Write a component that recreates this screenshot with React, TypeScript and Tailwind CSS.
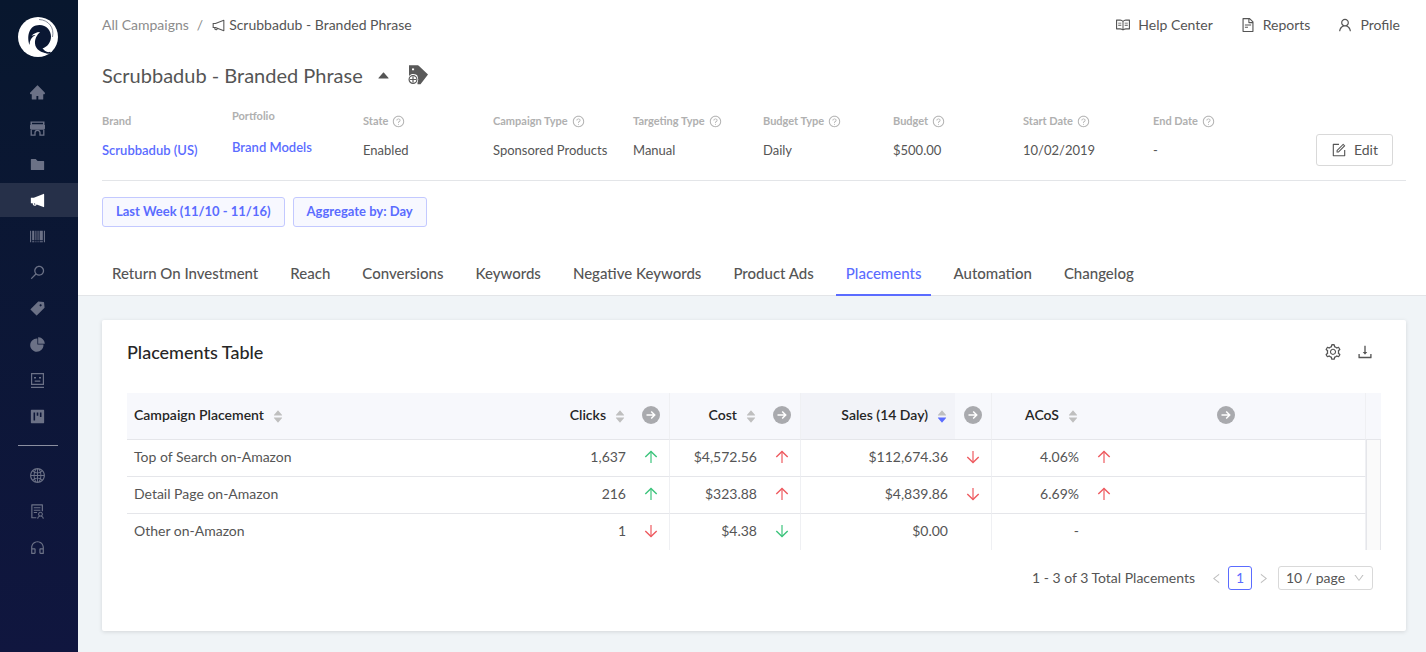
import React from 'react';
import {
  AiFillCaretDown,
  AiFillCaretUp,
  AiFillFolder,
  AiFillHome,
  AiFillNotification,
  AiFillPieChart,
  AiFillProject,
  AiFillTag,
  AiOutlineBarcode,
  AiOutlineCustomerService,
  AiOutlineDown,
  AiOutlineDownload,
  AiOutlineFileText,
  AiOutlineForm,
  AiOutlineGlobal,
  AiOutlineLeft,
  AiOutlineNotification,
  AiOutlineQuestionCircle,
  AiOutlineRead,
  AiOutlineRight,
  AiOutlineSearch,
  AiOutlineSetting,
  AiOutlineSolution,
  AiOutlineUser,
} from 'react-icons/ai';

type IconType = React.ComponentType<{ className?: string }>;
type Trend = 'up-good' | 'up-bad' | 'down-good' | 'down-bad' | null;

const Logo = () => (
  <svg viewBox="0 0 40 40" className="h-10 w-10">
    <circle cx="20" cy="20" r="20" fill="#fff" />
    <path
      d="M11.500 28C8.500 19 11 8 21.500 8C28.500 8 33 13.500 33 19.500C33 25.500 29 30 24.500 31.500C26 34 28.500 35.500 32 36C24 36.500 17.500 33 17 26.500C16.700 21.500 19 18 22 15C18.500 15.200 15.500 16.500 13.500 19C15 18.300 16 18 17.500 18C13.500 20 11.500 23.500 11.500 28Z"
      fill="#0a1733"
    />
    <path d="M21 2.500C31 3 36.500 11 34.500 20" fill="none" stroke="#0a1733" strokeWidth="0.5" />
    <path d="M24 32C26.500 35.500 29.500 36.500 32.500 35.500" fill="none" stroke="#0a1733" strokeWidth="1.5" />
  </svg>
);

const StoreIcon: IconType = ({ className }) => (
  <svg viewBox="-0.5 -0.5 17 17" className={className} fill="currentColor">
    <path fillRule="evenodd" d="M1 1h14v4H1zM2.500 2.200v1.600h11V2.200z" />
    <path d="M.5 4.500h15v3.800l-1.500 1H2l-1.500-1z" />
    <path d="M1.700 9v5.700h3.800v-2.400a2.500 2.500 0 0 1 5 0v2.400h3.800V9" fill="none" stroke="currentColor" strokeWidth="1.300" />
  </svg>
);

const RobotIcon: IconType = ({ className }) => (
  <svg viewBox="-0.5 -0.5 17 17" className={className} fill="currentColor">
    <path fillRule="evenodd" d="M1.500 0.500h13v12h-13zM2.700 1.700v9.600h10.600V1.700z" />
    <path d="M4.500 4.500h2V6h-2zM9.500 4.500h2V6h-2zM5.200 8h5.600v1.300H5.200zM1.500 14.300h13v1.200h-13z" />
  </svg>
);

const MirroredSearch: IconType = ({ className }) => <AiOutlineSearch className={`${className} -scale-x-100`} />;

const TagAddIcon = () => (
  <svg viewBox="0 0 20 20" className="h-5 w-5">
    <path fillRule="evenodd" d="M1 .5h9.500L20 9.500l-7.500 9.700H9.500V9H1zM4 3.200v2.300h2.300V3.200z" fill="#595959" />
    <circle cx="5" cy="14.500" r="5.200" fill="#fff" />
    <path d="M1 .5h9v10.500C8 8.500 3 8 1 11z M4 3.200v2.300h2.300V3.200z" fillRule="evenodd" fill="#595959" />
    <circle cx="5" cy="14.500" r="3.900" fill="#fff" stroke="#595959" strokeWidth="1.200" />
    <path d="M5 11.500v6M2 14.500h6" stroke="#595959" strokeWidth="1.200" />
  </svg>
);

const mainNav: { label: string; icon: IconType }[] = [
  { label: 'Home', icon: AiFillHome },
  { label: 'Brands', icon: StoreIcon },
  { label: 'Portfolios', icon: AiFillFolder },
  { label: 'Campaigns', icon: AiFillNotification },
  { label: 'Products', icon: AiOutlineBarcode },
  { label: 'Keywords', icon: MirroredSearch },
  { label: 'Tags', icon: AiFillTag },
  { label: 'Analytics', icon: AiFillPieChart },
  { label: 'Automation', icon: RobotIcon },
  { label: 'Boards', icon: AiFillProject },
];

const footerNav: { label: string; icon: IconType }[] = [
  { label: 'Marketplaces', icon: AiOutlineGlobal },
  { label: 'Accounts', icon: AiOutlineSolution },
  { label: 'Support', icon: AiOutlineCustomerService },
];

const topLinks: { label: string; icon: IconType }[] = [
  { label: 'Help Center', icon: AiOutlineRead },
  { label: 'Reports', icon: AiOutlineFileText },
  { label: 'Profile', icon: AiOutlineUser },
];

const details = [
  { label: 'State', value: 'Enabled' },
  { label: 'Campaign Type', value: 'Sponsored Products' },
  { label: 'Targeting Type', value: 'Manual' },
  { label: 'Budget Type', value: 'Daily' },
  { label: 'Budget', value: '$500.00' },
  { label: 'Start Date', value: '10/02/2019' },
  { label: 'End Date', value: '-' },
];

const tabs = [
  'Return On Investment',
  'Reach',
  'Conversions',
  'Keywords',
  'Negative Keywords',
  'Product Ads',
  'Placements',
  'Automation',
  'Changelog',
];

const metrics = ['Clicks', 'Cost', 'Sales (14 Day)', 'ACoS'];

const rows: { name: string; cells: { value: string; trend: Trend }[] }[] = [
  {
    name: 'Top of Search on-Amazon',
    cells: [
      { value: '1,637', trend: 'up-good' },
      { value: '$4,572.56', trend: 'up-bad' },
      { value: '$112,674.36', trend: 'down-bad' },
      { value: '4.06%', trend: 'up-bad' },
    ],
  },
  {
    name: 'Detail Page on-Amazon',
    cells: [
      { value: '216', trend: 'up-good' },
      { value: '$323.88', trend: 'up-bad' },
      { value: '$4,839.86', trend: 'down-bad' },
      { value: '6.69%', trend: 'up-bad' },
    ],
  },
  {
    name: 'Other on-Amazon',
    cells: [
      { value: '1', trend: 'down-bad' },
      { value: '$4.38', trend: 'down-good' },
      { value: '$0.00', trend: null },
      { value: '-', trend: null },
    ],
  },
];

const NavItem = ({ label, icon: Icon, active = false }: { label: string; icon: IconType; active?: boolean }) => (
  <a
    href="#"
    aria-label={label}
    className={`flex h-[34px] items-center justify-center pt-px pr-[3px] ${active ? 'bg-[#263049] text-white' : 'text-[#6b7186]'}`}
  >
    <Icon className="h-[17px] w-[17px]" />
  </a>
);

const Sidebar = () => (
  <aside className="flex w-[78px] shrink-0 flex-col bg-linear-to-b from-[#08172e] to-[#10163f] pt-[17px]">
    <a href="#" aria-label="Dashboard" className="mb-[18px] flex justify-center pr-[2px]">
      <Logo />
    </a>
    <nav className="flex flex-col gap-[2px]">
      {mainNav.map((item) => (
        <NavItem key={item.label} {...item} active={item.label === 'Campaigns'} />
      ))}
    </nav>
    <hr className="mt-3 mr-5 mb-3 ml-[18px] border-[#8b8fa0]" />
    <nav className="flex flex-col gap-[2px]">
      {footerNav.map((item) => (
        <NavItem key={item.label} {...item} />
      ))}
    </nav>
  </aside>
);

const Sorter = ({ active = false }: { active?: boolean }) => (
  <span className="ml-2 inline-flex flex-col align-middle text-[#bfbfbf]">
    <AiFillCaretUp className="-mb-[5px] h-3 w-3" />
    <AiFillCaretDown className={`h-3 w-3 ${active ? 'text-[#5b6cff]' : ''}`} />
  </span>
);

const CircleArrow = () => (
  <svg viewBox="0 0 18 18" className="mx-auto h-[18px] w-[18px]">
    <circle cx="9" cy="9" r="9" fill="#a9aaae" />
    <path d="M4.500 9h8M9.200 5.500L12.700 9l-3.500 3.500" fill="none" stroke="#fff" strokeWidth="1.500" />
  </svg>
);

const TrendArrow = ({ trend }: { trend: Trend }) => {
  if (!trend) return null;
  return (
    <svg
      viewBox="0 0 14 14"
      fill="none"
      stroke="currentColor"
      className={`h-[14px] w-[14px] ${trend.startsWith('down') ? 'rotate-180' : ''} ${trend.endsWith('good') ? 'text-[#3cc47c]' : 'text-[#ee5a5f]'}`}
    >
      <path d="M7 13V1.500" strokeWidth="1.700" opacity="0.7" />
      <path d="M1.300 7L7 1.500L12.700 7" strokeWidth="1.400" />
    </svg>
  );
};

const CampaignHeader = () => (
  <header className="border-b border-[#e3e5e8] bg-white pt-[11px] pr-5 pl-6">
    <div className="flex items-center justify-between pr-[6px]">
      <nav aria-label="Breadcrumb" className="flex h-7 items-center text-sm">
        <a href="#" className="text-[#8c8c8c]">All Campaigns</a>
        <span className="mx-2 text-[#8c8c8c]">/</span>
        <AiOutlineNotification className="mr-[3px] h-[15px] w-[15px]" />
        <span>Scrubbadub - Branded Phrase</span>
      </nav>
      <nav aria-label="Account" className="flex h-7 items-center gap-[27px] text-sm">
        {topLinks.map(({ label, icon: Icon }) => (
          <a key={label} href="#" className="flex items-center gap-[7px]">
            <Icon className="h-4 w-4" />
            {label}
          </a>
        ))}
      </nav>
    </div>

    <div className="mt-[21px] flex h-[30px] items-center">
      <h1 className="text-xl">Scrubbadub - Branded Phrase</h1>
      <button aria-label="Toggle details" className="ml-[13px] flex">
        <AiFillCaretUp className="h-[15px] w-[15px]" />
      </button>
      <button aria-label="Add tag" className="ml-[17px] flex">
        <TagAddIcon />
      </button>
    </div>

    <div className="mt-4 flex h-[75px] justify-between border-b border-[#e3e5e8]">
      <dl className="grid grid-cols-[130px_131px_130px_140px_repeat(5,130px)] text-[13px]">
        <div className="pt-[6px]">
          <dt className="text-[11px] leading-[18px] font-bold text-[#b0b0b0]">Brand</dt>
          <dd className="mt-[10px] leading-5 font-semibold"><a href="#" className="text-[#5b6cff]">Scrubbadub (US)</a></dd>
        </div>
        <div className="pt-px">
          <dt className="text-[11px] leading-[18px] font-bold text-[#b0b0b0]">Portfolio</dt>
          <dd className="mt-3 leading-5 font-semibold"><a href="#" className="text-[#5b6cff]">Brand Models</a></dd>
        </div>
        {details.map(({ label, value }) => (
          <div key={label} className="pt-[6px]">
            <dt className="flex items-center gap-1 text-[11px] leading-[18px] font-bold text-[#b0b0b0]">
              {label}
              <AiOutlineQuestionCircle className="h-[13px] w-[13px]" />
            </dt>
            <dd className="mt-[10px] leading-5">{value}</dd>
          </div>
        ))}
      </dl>
      <button className="mt-7 mr-[13px] flex h-8 w-[77px] items-center justify-center gap-[7px] rounded-[3px] border border-[#d9d9d9] text-sm">
        <AiOutlineForm className="h-4 w-4" />
        Edit
      </button>
    </div>

    <div className="mt-4 flex gap-2 text-[13px] font-bold text-[#5b6cff]">
      <button className="h-[30px] rounded-[3px] border border-[#c3c9ff] bg-[#f7f8ff] px-[13px]">Last Week (11/10 - 11/16)</button>
      <button className="h-[30px] rounded-[3px] border border-[#c3c9ff] bg-[#f7f8ff] px-[13px]">Aggregate by: Day</button>
    </div>

    <div role="tablist" className="-mb-px mt-[25px] flex gap-3 text-[15px] font-medium">
      {tabs.map((tab) => (
        <button
          key={tab}
          role="tab"
          aria-selected={tab === 'Placements'}
          className={`h-11 border-b-2 px-[10px] ${tab === 'Placements' ? 'border-[#5b6cff] text-[#5b6cff]' : 'border-transparent'}`}
        >
          {tab}
        </button>
      ))}
    </div>
  </header>
);

const PlacementsTable = () => (
  <table className="w-full table-fixed border-separate border-spacing-0 text-sm">
    <colgroup>
      <col />
      <col className="w-[94px]" />
      <col className="w-[37px]" />
      <col className="w-[94px]" />
      <col className="w-[37px]" />
      <col className="w-[154px]" />
      <col className="w-[37px]" />
      <col className="w-[94px]" />
      <col className="w-[280px]" />
      <col className="w-[15px]" />
    </colgroup>
    <thead className="bg-[#f7f8fc] text-[#262626]">
      <tr className="h-[47px]">
        <th className="border-b border-[#e5e6ea] pb-px pl-[7px] text-left font-semibold">
          Campaign Placement
          <Sorter />
        </th>
        {metrics.map((metric) => {
          const sorted = metric === 'Sales (14 Day)';
          return (
            <React.Fragment key={metric}>
              <th className={`border-b border-[#e5e6ea] pr-[7px] pb-px text-right font-semibold whitespace-nowrap ${sorted ? 'bg-[#f2f3f8]' : ''}`}>
                {metric}
                <Sorter active={sorted} />
              </th>
              <th aria-label={`${metric} change`} className="border-r border-b border-r-[#eff0f3] border-b-[#e5e6ea] pb-[3px]">
                <CircleArrow />
              </th>
            </React.Fragment>
          );
        })}
        <td className="border-b border-[#e5e6ea]" />
      </tr>
    </thead>
    <tbody>
      {rows.map((row, i) => {
        const last = i === rows.length - 1;
        const line = last ? '' : 'border-b border-b-[#e5e6ea]';
        return (
          <tr key={row.name} className={last ? 'h-9' : 'h-[37px]'}>
            <td className={`pb-[3px] pl-[7px] ${line}`}>{row.name}</td>
            {row.cells.map((cell, j) => (
              <React.Fragment key={metrics[j]}>
                <td className={`pr-[7px] pb-[3px] text-right ${line}`}>{cell.value}</td>
                <td className={`border-r border-r-[#eff0f3] pb-[3px] pl-[11px] ${line}`}>
                  <TrendArrow trend={cell.trend} />
                </td>
              </React.Fragment>
            ))}
            <td className="border-x border-[#e5e6ea] bg-[#fafafa]" />
          </tr>
        );
      })}
    </tbody>
  </table>
);

const Pagination = () => (
  <div className="mt-4 flex h-6 items-center justify-end pr-2 text-sm">
    <span className="mr-[15px]">1 - 3 of 3 Total Placements</span>
    <button aria-label="Previous page" className="mr-[5px] text-[#bfbfbf]"><AiOutlineLeft className="h-[13px] w-[13px]" /></button>
    <button className="h-6 w-6 rounded-[3px] border border-[#5b6cff] text-[#5b6cff]">1</button>
    <button aria-label="Next page" className="ml-[5px] text-[#bfbfbf]"><AiOutlineRight className="h-[13px] w-[13px]" /></button>
    <div className="relative ml-2">
      <select aria-label="Page size" className="h-6 w-[95px] appearance-none rounded-[3px] border border-[#d9d9d9] bg-white pl-[7px]">
        <option>10 / page</option>
        <option>20 / page</option>
        <option>50 / page</option>
      </select>
      <AiOutlineDown className="pointer-events-none absolute top-[6px] right-2 h-3 w-3 text-[#bfbfbf]" />
    </div>
  </div>
);

export default function App() {
  return (
    <div className="flex min-h-screen bg-[#f0f4f7] font-['Lato',sans-serif] text-[#555555]">
      <Sidebar />
      <div className="min-w-0 flex-1">
        <CampaignHeader />
        <main className="pt-6 pr-5 pb-5 pl-6">
          <section className="rounded-[2px] bg-white px-[25px] pb-[41px] shadow-[0_1px_4px_rgba(0,0,0,0.12)]">
            <div className="flex h-[73px] items-center justify-between pr-[7px] pb-[10px]">
              <h2 className="text-lg font-medium text-[#262626]">Placements Table</h2>
              <div className="flex gap-[14px]">
                <button aria-label="Table settings"><AiOutlineSetting className="h-[18px] w-[18px]" /></button>
                <button aria-label="Download"><AiOutlineDownload className="h-[18px] w-[18px]" /></button>
              </div>
            </div>
            <PlacementsTable />
            <Pagination />
          </section>
        </main>
      </div>
    </div>
  );
}
